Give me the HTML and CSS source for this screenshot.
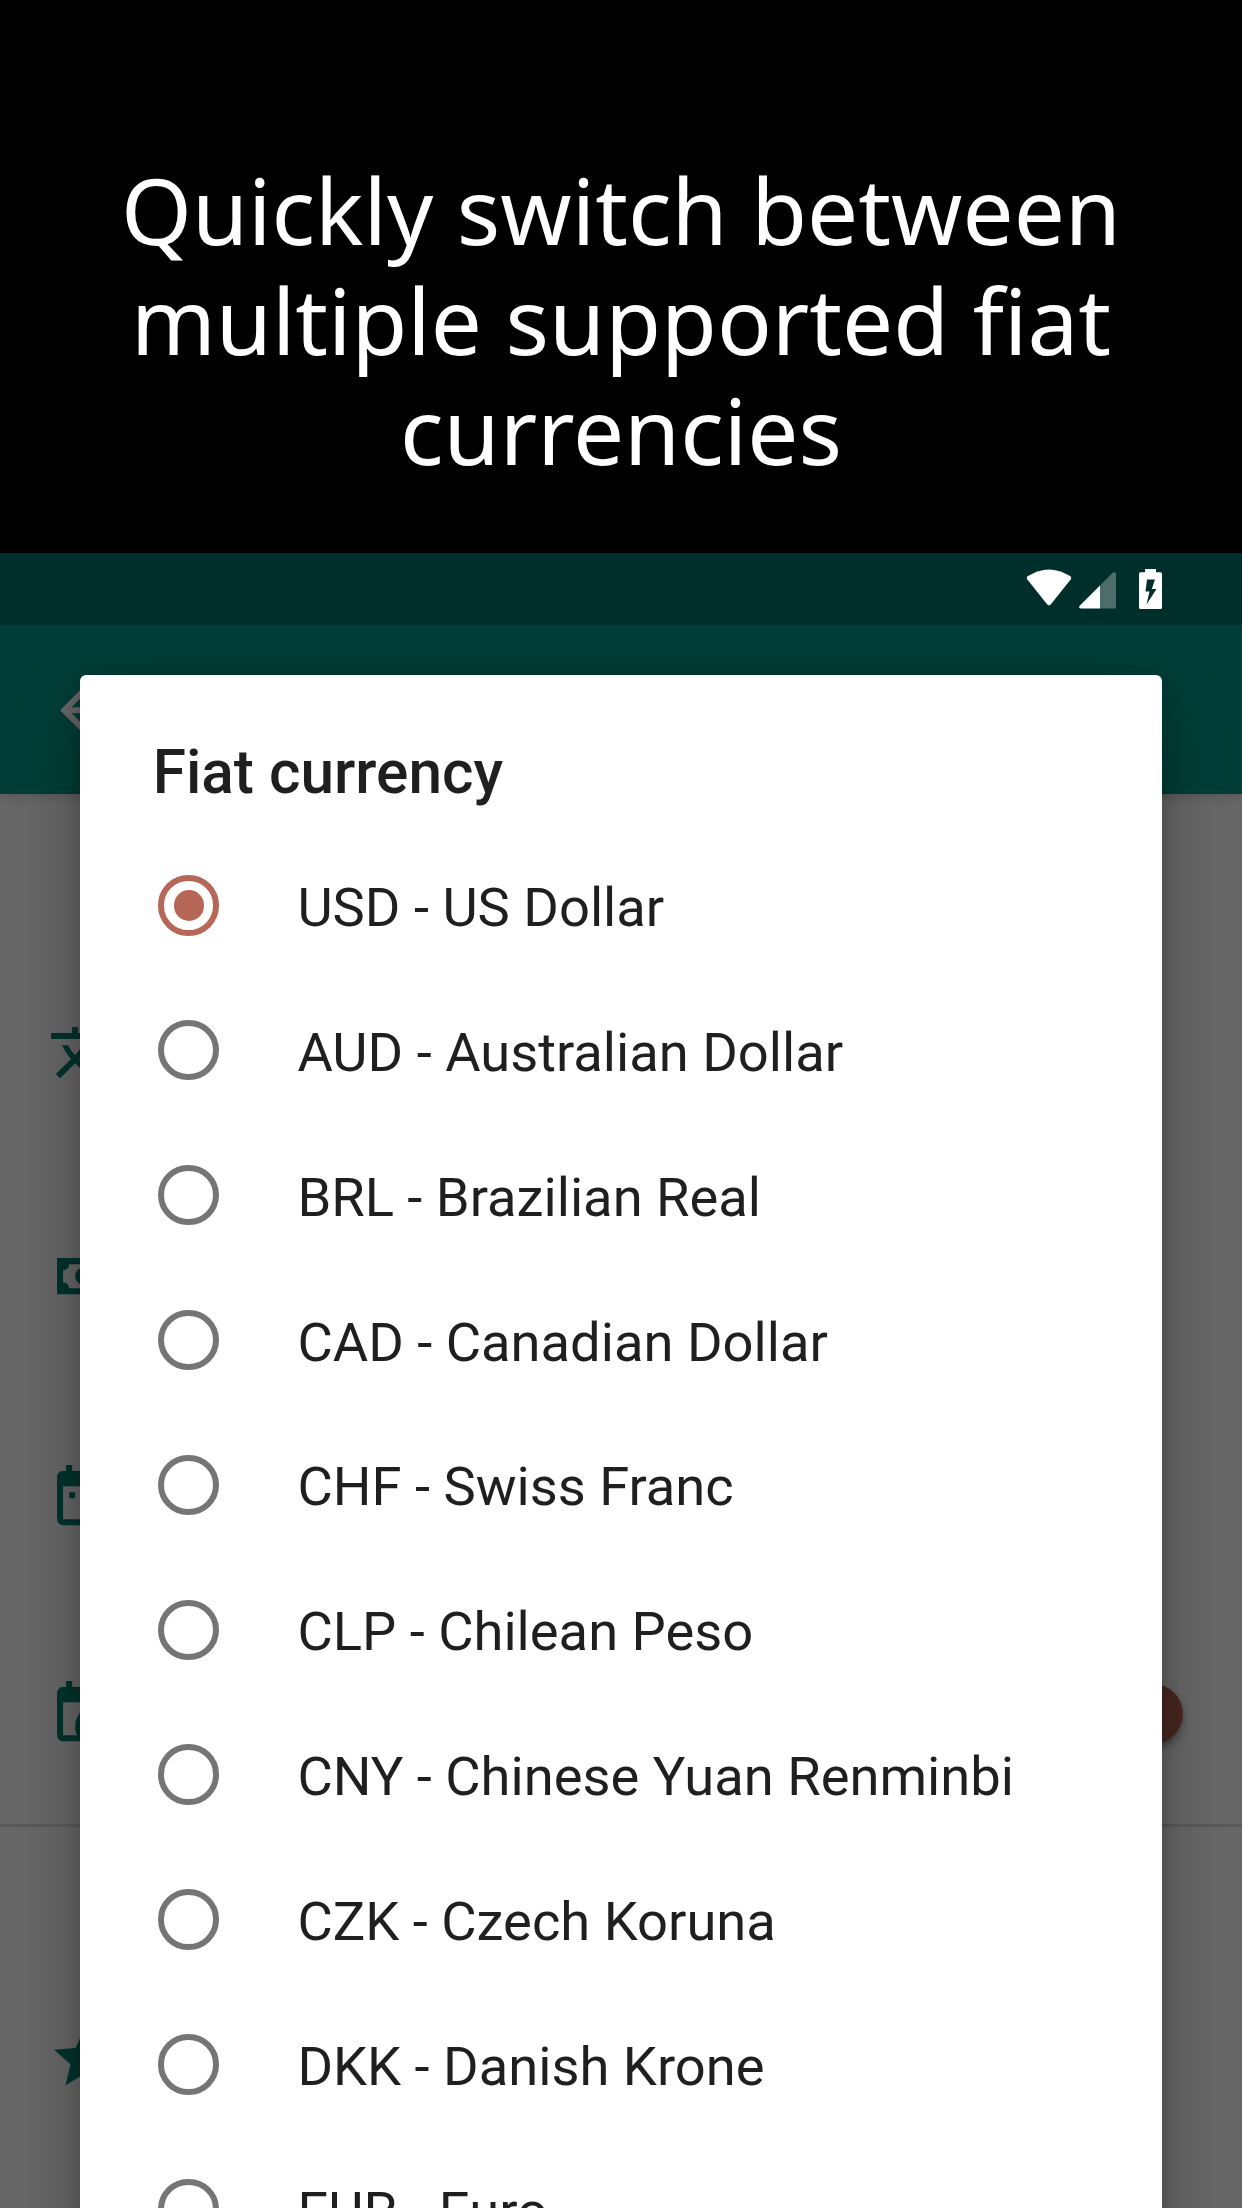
FILE: index.html
```html
<!DOCTYPE html>
<html lang="en">
<head>
<meta charset="utf-8">
<title>Fiat currency</title>
<link rel="stylesheet" href="styles.css">
</head>
<body>
<div class="page">
  <h1 class="headline">Quickly switch between<br>multiple supported fiat<br>currencies</h1>
  <main class="phone">
    <div class="statusbar">
      <svg class="wifi" viewBox="0 0 46 39"><path d="M1.4 7.3Q23-6.500 44.600 7.300Q46.600 8.700 45.200 10.800L25 36.300Q23 38.500 21 36.300L.8 10.800Q-.6 8.700 1.400 7.300Z"/></svg>
      <svg class="signal" viewBox="0 0 37 37"><path opacity=".3" d="M21 13.500L33.500 1Q35-.3 36.500 .8L37 2V35Q37 36.500 35.500 36.500H21Z"/><path d="M21 13.500V36.500H2Q-1 36 .7 33.800Z"/></svg>
      <svg class="battery" viewBox="0 0 23 40"><path fill-rule="evenodd" d="M6 0H17V3.300H21.500Q23 3.500 23 5V38.500Q23 40 21.500 40H1.500Q0 40 0 38.500V5Q0 3.500 1.500 3.300H6ZM8 10.500L6.500 22.500H10.500L7.500 35.500L17.500 20H12.800L16 10.500Z"/></svg>
    </div>
    <div class="appbar"><svg class="icon" viewBox="0 0 24 24"><path d="M20 11H7.830l5.590-5.590L12 4l-8 8 8 8 1.410-1.410L7.830 13H20v-2z"/></svg></div>
    <div class="settings">
      <div class="setting language"><svg class="icon" viewBox="0 0 24 24"><path d="M12.870 15.070l-2.540-2.510.03-.03c1.740-1.940 2.980-4.170 3.710-6.530H17V4h-7V2H8v2H1v1.990h11.170C11.500 7.920 10.440 9.750 9 11.350 8.070 10.320 7.300 9.190 6.690 8h-2c.73 1.630 1.730 3.170 2.980 4.560l-5.090 5.020L4 19l5-5 3.110 3.110.76-2.040zM18.500 10h-2L12 22h2l1.120-3h4.750L21 22h2l-4.500-12zm-2.620 7l1.620-4.330L19.120 17h-3.240z"/></svg></div>
      <div class="setting currency"><svg class="icon" viewBox="0 0 24 24"><path d="M3,6H21V18H3V6M12,9A3,3 0 0,1 15,12A3,3 0 0,1 12,15A3,3 0 0,1 9,12A3,3 0 0,1 12,9M7,8A2,2 0 0,1 5,10V14A2,2 0 0,1 7,16H17A2,2 0 0,1 19,14V10A2,2 0 0,1 17,8H7Z"/></svg></div>
      <div class="setting date"><svg class="icon" viewBox="0 0 24 24"><path d="M9,10H7V12H9V10M13,10H11V12H13V10M17,10H15V12H17V10M19,3H18V1H16V3H8V1H6V3H5C3.890,3 3,3.900 3,5V19A2,2 0 0,0 5,21H19A2,2 0 0,0 21,19V5A2,2 0 0,0 19,3M19,19H5V8H19V19Z"/></svg></div>
      <div class="setting time"><svg class="icon" viewBox="0 0 24 24"><path d="M15,13H16.500V15.820L18.940,17.230L18.190,18.530L15,16.690V13M19,8H5V19H9.670C9.240,18.090 9,17.070 9,16A7,7 0 0,1 16,9C17.070,9 18.090,9.240 19,9.670V8M5,21C3.890,21 3,20.100 3,19V5C3,3.890 3.890,3 5,3H6V1H8V3H16V1H18V3H19A2,2 0 0,1 21,5V11.100C22.240,12.360 23,14.090 23,16A7,7 0 0,1 16,23C14.090,23 12.360,22.240 11.100,21H5Z"/></svg><span class="thumb"></span></div>
      <div class="setting rate"><svg class="icon" viewBox="0 0 24 24"><path d="M12 17.270L18.180 21l-1.640-7.030L22 9.240l-7.190-.61L12 2 9.190 8.630 2 9.240l5.460 4.730L5.820 21z"/></svg></div>
    </div>
    <section class="dialog" role="dialog" aria-labelledby="title">
      <h2 class="title" id="title">Fiat currency</h2>
      <ul class="options">
        <li class="option"><span class="radio checked"></span><span class="label">USD - US Dollar</span></li>
        <li class="option"><span class="radio"></span><span class="label">AUD - Australian Dollar</span></li>
        <li class="option"><span class="radio"></span><span class="label">BRL - Brazilian Real</span></li>
        <li class="option"><span class="radio"></span><span class="label">CAD - Canadian Dollar</span></li>
        <li class="option"><span class="radio"></span><span class="label">CHF - Swiss Franc</span></li>
        <li class="option"><span class="radio"></span><span class="label">CLP - Chilean Peso</span></li>
        <li class="option"><span class="radio"></span><span class="label">CNY - Chinese Yuan Renminbi</span></li>
        <li class="option"><span class="radio"></span><span class="label">CZK - Czech Koruna</span></li>
        <li class="option"><span class="radio"></span><span class="label">DKK - Danish Krone</span></li>
        <li class="option"><span class="radio"></span><span class="label">EUR - Euro</span></li>
      </ul>
    </section>
  </main>
</div>
</body>
</html>
```
FILE: styles.css
```css
* { box-sizing: border-box; }
body { margin: 0; background: #000; }
.page {
  width: 1242px;
  height: 2208px;
  overflow: hidden;
  display: flex;
  flex-direction: column;
}
.headline {
  margin: 0;
  height: 553px;
  padding-top: 155px;
  color: #fff;
  font: 400 90.8px/110px "Noto Sans", sans-serif;
  text-align: center;
  white-space: nowrap;
}
.phone {
  position: relative;
  flex: 1;
  min-height: 0;
  overflow: hidden;
  background: #666;
  font-family: Roboto, sans-serif;
}
.statusbar {
  position: relative;
  z-index: 2;
  height: 72px;
  padding: 16px 80px 0 0;
  display: flex;
  justify-content: flex-end;
  background: #002f2b;
  fill: #fff;
}
.wifi { width: 46px; height: 38px; margin-right: 7px; }
.signal { width: 37px; height: 37px; margin: 3px 23px 0 0; }
.battery { width: 23px; height: 40px; }
.icon { display: block; width: 72.4px; height: 72.4px; }
.appbar {
  height: 169px;
  padding: 48.500px 0 0 48.300px;
  background: #003d36;
  box-shadow: 0 2px 10px rgba(0, 0, 0, .18);
  fill: #666;
}
.settings { fill: #00332c; }
.setting {
  display: flex;
  align-items: center;
  justify-content: space-between;
  height: 217px;
  padding: 0 59px 0 48.300px;
}
.language { margin-top: 155px; }
.currency { height: 220px; }
.date { height: 224px; }
.time { height: 214px; padding-bottom: 6px; }
.thumb {
  width: 60px;
  height: 60px;
  border-radius: 50%;
  background: #48271f;
  box-shadow: 0 5px 8px rgba(0, 0, 0, .35);
}
.rate { height: 465px; border-top: 3px solid #595959; }
.dialog {
  position: absolute;
  z-index: 1;
  left: 80.300px;
  right: 80.400px;
  top: 121.500px;
  bottom: -80px;
  border-radius: 6px;
  background: #fff;
  box-shadow: 0 30px 60px rgba(0, 0, 0, .28), 0 0 18px rgba(0, 0, 0, .14);
  color: #1f1f1f;
}
.title {
  margin: 0;
  height: 158.500px;
  padding: 62.500px 0 0 72.400px;
  font-size: 60.350px;
  line-height: 71px;
  font-weight: 500;
}
.options { margin: 0; padding: 0; list-style: none; }
.option {
  display: flex;
  align-items: center;
  gap: 78.500px;
  height: 144.860px;
  padding-left: 78.200px;
}
.radio {
  width: 60.400px;
  height: 60.400px;
  border: 6px solid #757575;
  border-radius: 50%;
}
.checked {
  display: grid;
  place-items: center;
  border-color: #b76758;
}
.checked::after {
  content: "";
  width: 30.200px;
  height: 30.200px;
  border-radius: 50%;
  background: #b76758;
}
.label { font-size: 54.300px; line-height: 64px; padding-top: 5px; }
```
